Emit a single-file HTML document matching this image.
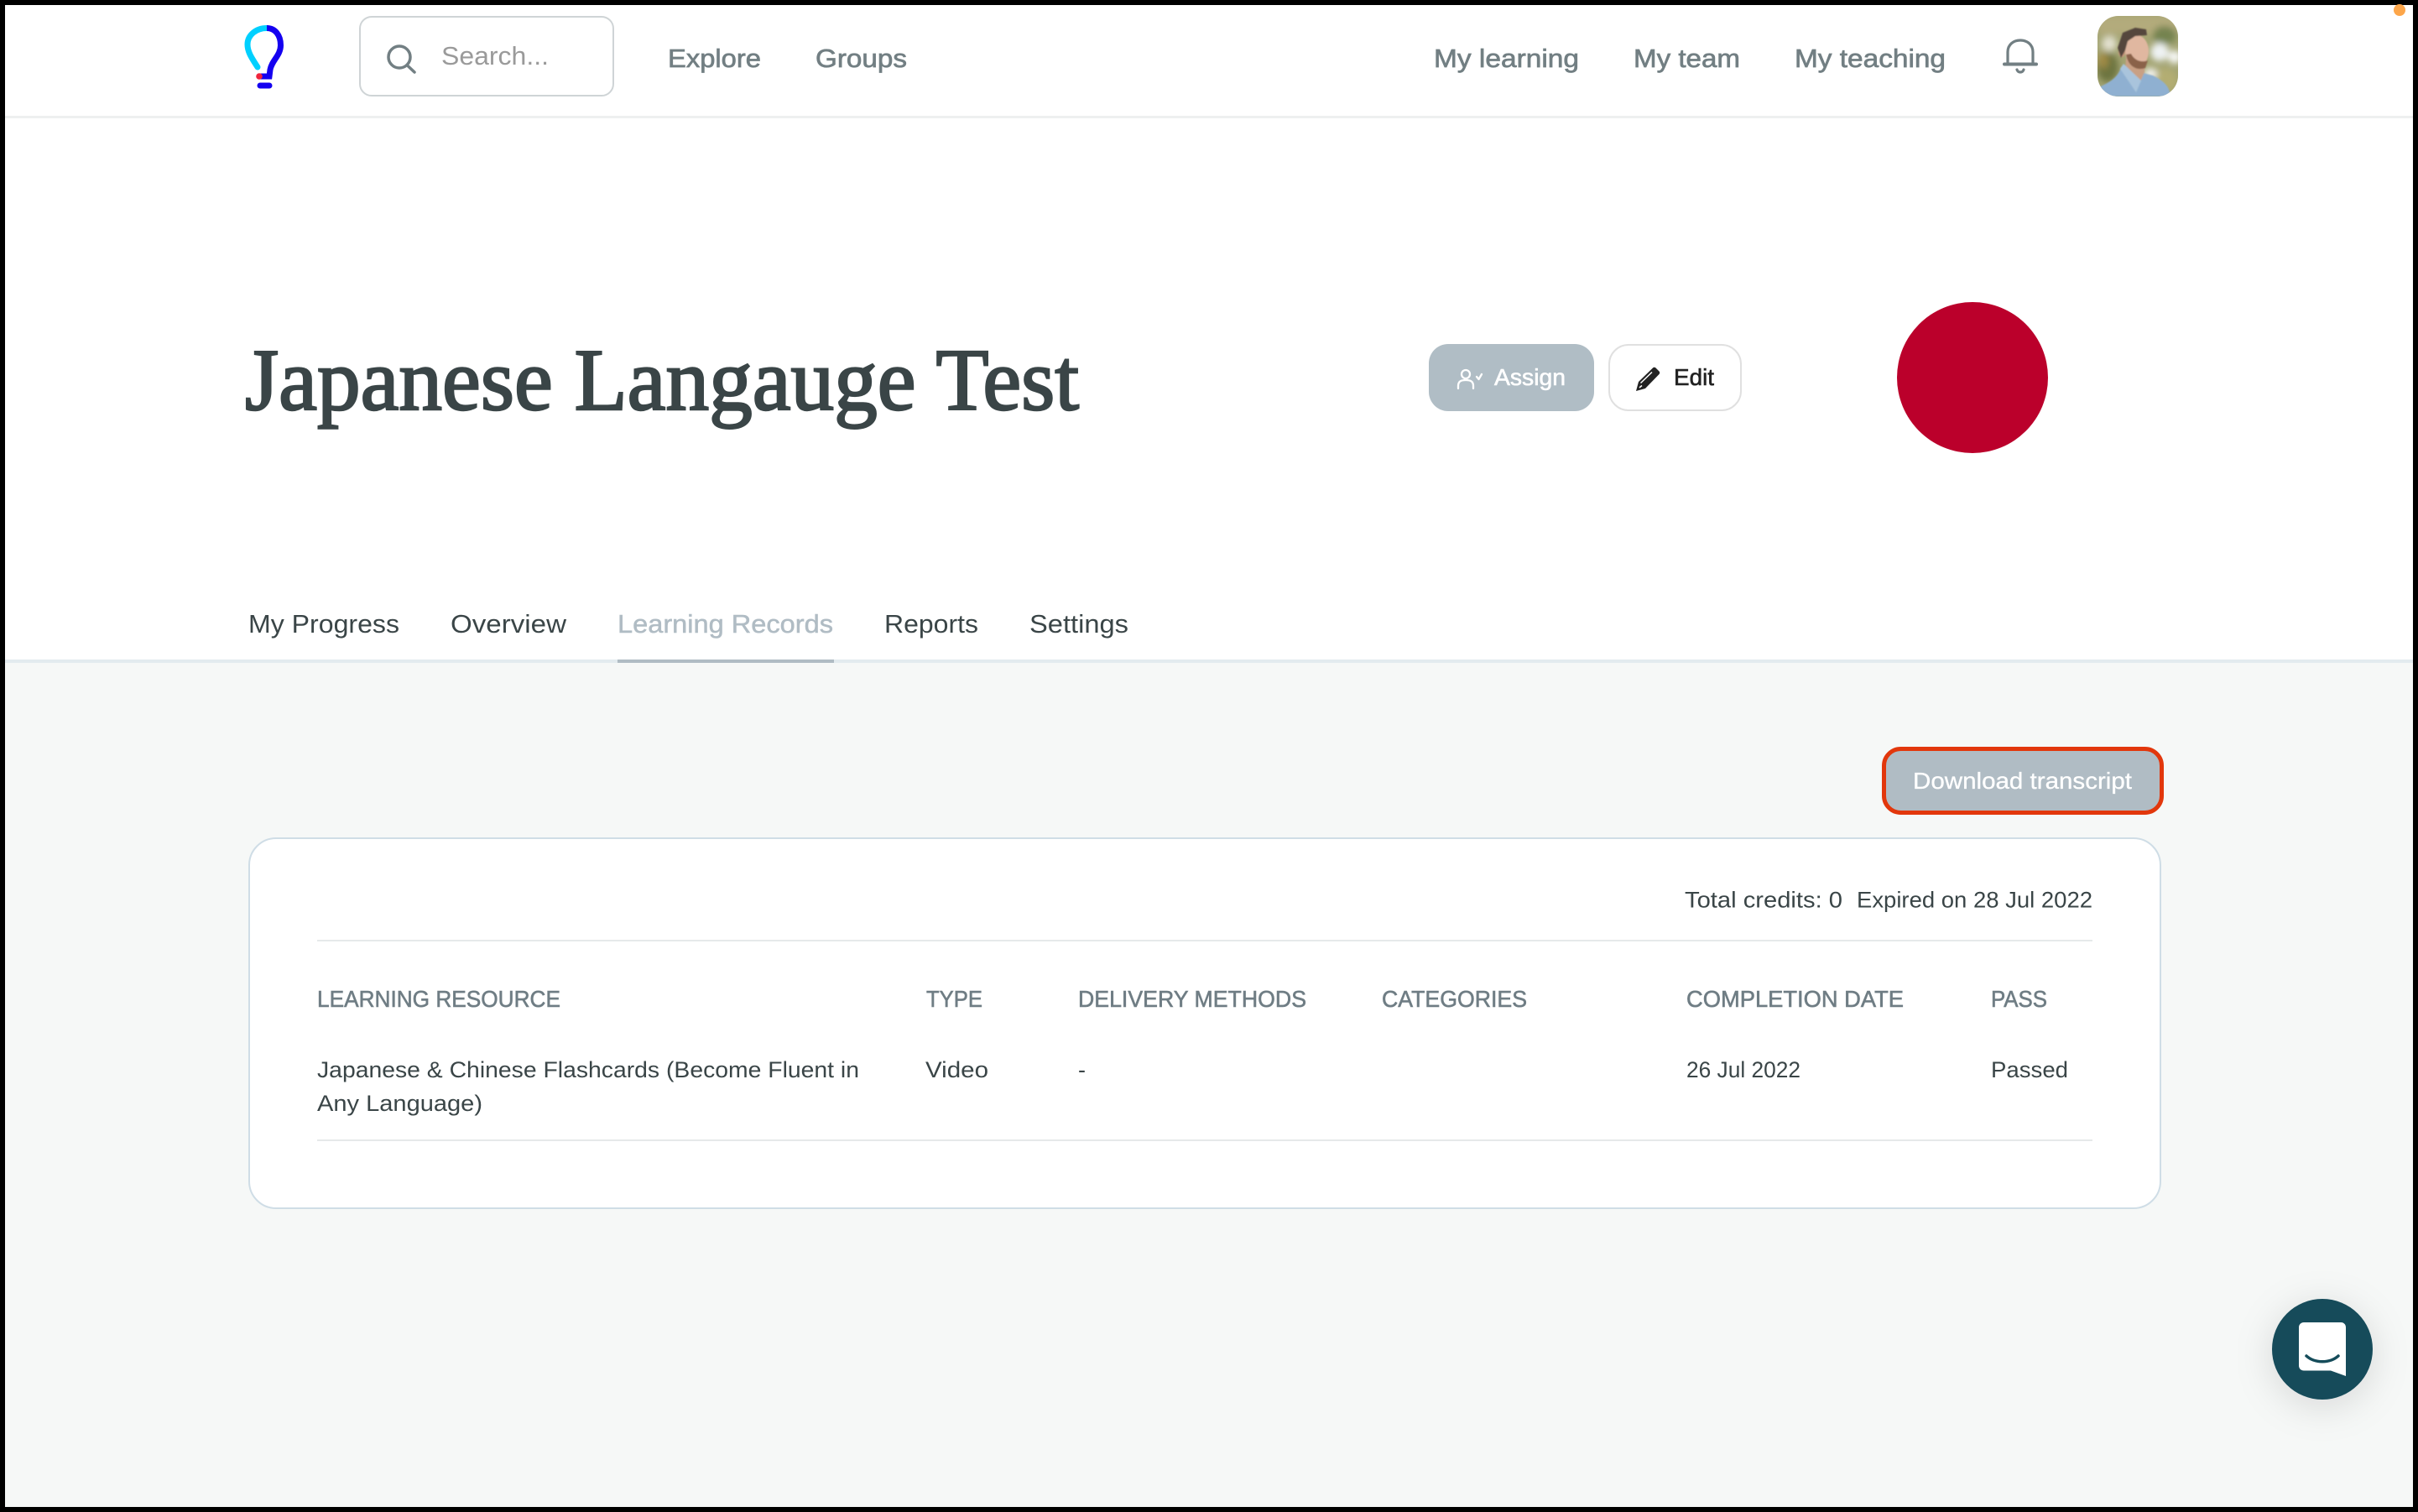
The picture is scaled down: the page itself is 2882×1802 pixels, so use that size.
<!DOCTYPE html>
<html lang="en">
<head>
<meta charset="utf-8">
<title>Japanese Langauge Test</title>
<style>
html,body{margin:0;padding:0;background:#000;width:2882px;height:1802px;overflow:hidden}
svg{display:block;position:absolute;left:0;top:0}
text{font-family:"Liberation Sans",sans-serif}
.nav{font-size:31px;fill:#727f83;stroke:#727f83;stroke-width:.7px}
.tab{font-size:31px;fill:#3a4547}
.hd{font-size:28px;fill:#6f7d84;stroke:#6f7d84;stroke-width:.6px}
.td{font-size:27px;fill:#3a4547}
</style>
</head>
<body>
<svg width="2882" height="1802" viewBox="0 0 2882 1802" xmlns="http://www.w3.org/2000/svg">
<defs>
<filter id="sh" x="-60%" y="-60%" width="220%" height="220%"><feDropShadow dx="0" dy="8" stdDeviation="22" flood-color="#000" flood-opacity=".13"/></filter>
<filter id="b5" x="-30%" y="-30%" width="160%" height="160%"><feGaussianBlur stdDeviation="4"/></filter>
<filter id="b2" x="-30%" y="-30%" width="160%" height="160%"><feGaussianBlur stdDeviation=".9"/></filter>
<clipPath id="av"><rect x="2500" y="19" width="96" height="96" rx="25"/></clipPath>
</defs>

<rect x="6" y="6" width="2870" height="1790" fill="#fff"/>
<rect x="6" y="788" width="2870" height="1008" fill="#f6f8f7"/>
<rect x="6" y="138" width="2870" height="3" fill="#eef0f0"/>
<rect x="6" y="786" width="2870" height="4" fill="#e3ebef"/>
<circle cx="2860" cy="12" r="7" fill="#fda64a"/>

<!-- logo -->
<g fill="none" stroke-width="7" stroke-linecap="round">
<path d="M307 80 C300 69 295 62 295 53 C295 42 305 33.500 318 33.500" stroke="#00d0ff"/>
<path d="M318 33.500 C328 33.500 334.500 42 334.500 54 C334.500 66 324 72 322 83 L321 91 L309 91" stroke="#1400f0" stroke-linecap="butt"/>
<path d="M310 102 L321 102" stroke="#1400f0"/>
</g>
<circle cx="309" cy="91" r="3.800" fill="#f0243c"/>

<!-- search -->
<rect x="429" y="20" width="302" height="94" rx="14" fill="#fff" stroke="#cfd4d6" stroke-width="2"/>
<g fill="none" stroke="#727f83" stroke-width="3.500" stroke-linecap="round">
<circle cx="476" cy="68" r="13"/><path d="M485.500 78 L494 86"/>
</g>
<text x="526" y="77" font-size="31" fill="#9a9a9a" textLength="128" lengthAdjust="spacingAndGlyphs">Search...</text>

<text class="nav" x="796" y="80" textLength="111" lengthAdjust="spacingAndGlyphs">Explore</text>
<text class="nav" x="972" y="80" textLength="109" lengthAdjust="spacingAndGlyphs">Groups</text>
<text class="nav" x="1709" y="80" textLength="173" lengthAdjust="spacingAndGlyphs">My learning</text>
<text class="nav" x="1947" y="80" textLength="127" lengthAdjust="spacingAndGlyphs">My team</text>
<text class="nav" x="2139" y="80" textLength="180" lengthAdjust="spacingAndGlyphs">My teaching</text>

<!-- bell -->
<g fill="none" stroke="#727f83" stroke-width="3.200" stroke-linecap="round" stroke-linejoin="round">
<path d="M2393 75 V62 C2393 53 2400 48 2408 48 C2416 48 2423 53 2423 62 V75"/>
<path d="M2389 76.500 H2427" stroke-width="4"/>
<path d="M2404 83 C2405 87 2411 87 2412 83"/>
</g>

<!-- avatar -->
<g clip-path="url(#av)">
<rect x="2500" y="19" width="96" height="96" fill="#a3a472"/>
<g filter="url(#b5)">
<rect x="2500" y="19" width="96" height="22" fill="#b3ab7c"/>
<ellipse cx="2512" cy="80" rx="13" ry="18" fill="#6d7440"/>
<ellipse cx="2514" cy="52" rx="9" ry="9" fill="#e2e0cf"/>
<ellipse cx="2507" cy="72" rx="6" ry="10" fill="#a08a45"/>
<ellipse cx="2580" cy="42" rx="14" ry="11" fill="#75834f"/>
<ellipse cx="2574" cy="62" rx="11" ry="11" fill="#eef2f3"/>
<ellipse cx="2592" cy="68" rx="8" ry="8" fill="#f6f7f5"/>
<ellipse cx="2580" cy="96" rx="15" ry="15" fill="#b3ad72"/>
<ellipse cx="2563" cy="88" rx="8" ry="7" fill="#f2f2ee"/>
</g>
<g filter="url(#b2)">
<path d="M2500 105 C2512 99 2524 94 2528 80 L2566 90 C2578 96 2586 102 2587 115 H2500Z" fill="#8fb0d1"/>
<path d="M2534 70 L2533 84 L2548 104 L2556 86 L2556 72Z" fill="#c9a084"/>
<ellipse cx="2529" cy="62" rx="4" ry="6" fill="#c9977d"/>
<ellipse cx="2547" cy="61" rx="14" ry="19" fill="#e0b7a0"/>
<path d="M2534 65 C2536 78 2546 85 2557 81 L2560 72 C2552 75 2544 72 2540 64Z" fill="#8a6248"/>
<path d="M2524 57 L2530 39 L2545 33 L2558 35 L2559 42 L2545 43 L2536 49 L2533 60 L2528 69Z" fill="#54463d"/>
<path d="M2527 82 L2546 110 L2552 96 L2531 76Z" fill="#a9c4dc"/>
</g>
</g>

<!-- title -->
<text x="292" y="488" font-size="105" fill="#3a4547" stroke="#3a4547" stroke-width="2.400" textLength="994" lengthAdjust="spacingAndGlyphs" style="font-family:'Liberation Serif',serif">Japanese Langauge Test</text>

<!-- assign / edit -->
<rect x="1703" y="410" width="197" height="80" rx="23" fill="#b0bdc5"/>
<g fill="none" stroke="#fff" stroke-width="2.300" stroke-linecap="round" stroke-linejoin="round">
<circle cx="1747" cy="446" r="5"/>
<path d="M1738 463 V460 C1738 454 1742 453 1747 453 C1752 453 1756 454 1756 460 V463"/>
<path d="M1760 449 L1762.500 452 L1766 446"/>
</g>
<text x="1781" y="459" font-size="28" fill="#fff" stroke="#fff" stroke-width=".6" textLength="85" lengthAdjust="spacingAndGlyphs">Assign</text>

<rect x="1918" y="411" width="157" height="78" rx="23" fill="#fff" stroke="#e0e0e0" stroke-width="2"/>
<path d="M1950 466 L1953 455 L1970 438.500 C1971 437.500 1972.500 437.500 1973.500 438.500 L1977.500 442.500 C1978.500 443.500 1978.500 445 1977.500 446 L1961 463Z" fill="#222"/>
<path d="M1955.500 456.500 L1969 443.500 M1954 462 L1957 459.500" stroke="#fff" stroke-width="1.500" fill="none"/>
<text x="1995" y="459" font-size="28" fill="#222" stroke="#222" stroke-width=".6" textLength="48" lengthAdjust="spacingAndGlyphs">Edit</text>

<circle cx="2351" cy="450" r="90" fill="#bb002b"/>

<!-- tabs -->
<text class="tab" x="296" y="754" textLength="180" lengthAdjust="spacingAndGlyphs">My Progress</text>
<text class="tab" x="537" y="754" textLength="138" lengthAdjust="spacingAndGlyphs">Overview</text>
<text class="tab" x="736" y="754" textLength="257" lengthAdjust="spacingAndGlyphs" style="fill:#b0bcc4;stroke:#b0bcc4;stroke-width:.5px">Learning Records</text>
<text class="tab" x="1054" y="754" textLength="112" lengthAdjust="spacingAndGlyphs">Reports</text>
<text class="tab" x="1227" y="754" textLength="118" lengthAdjust="spacingAndGlyphs">Settings</text>
<rect x="736" y="786" width="258" height="4" fill="#b0bcc4"/>

<!-- download -->
<rect x="2245.500" y="892.500" width="331" height="76" rx="20" fill="#b0bcc4" stroke="#e2370c" stroke-width="5"/>
<text x="2280" y="940" font-size="27.500" fill="#fff" stroke="#fff" stroke-width=".3" textLength="261" lengthAdjust="spacingAndGlyphs">Download transcript</text>

<!-- card -->
<rect x="297" y="999" width="2278" height="441" rx="32" fill="#fff" stroke="#cfdde6" stroke-width="2"/>
<text class="td" x="2008" y="1081.500" textLength="188" lengthAdjust="spacingAndGlyphs">Total credits: 0</text>
<text class="td" x="2213" y="1081.500" textLength="281" lengthAdjust="spacingAndGlyphs">Expired on 28 Jul 2022</text>
<rect x="378" y="1120" width="2116" height="2" fill="#e6e9ea"/>
<rect x="378" y="1358" width="2116" height="2" fill="#e6e9ea"/>

<text class="hd" x="378" y="1200" textLength="290" lengthAdjust="spacingAndGlyphs">LEARNING RESOURCE</text>
<text class="hd" x="1104" y="1200" textLength="67" lengthAdjust="spacingAndGlyphs">TYPE</text>
<text class="hd" x="1285" y="1200" textLength="272" lengthAdjust="spacingAndGlyphs">DELIVERY METHODS</text>
<text class="hd" x="1647" y="1200" textLength="173" lengthAdjust="spacingAndGlyphs">CATEGORIES</text>
<text class="hd" x="2010" y="1200" textLength="259" lengthAdjust="spacingAndGlyphs">COMPLETION DATE</text>
<text class="hd" x="2373" y="1200" textLength="67" lengthAdjust="spacingAndGlyphs">PASS</text>

<text class="td" x="378" y="1284" textLength="646" lengthAdjust="spacingAndGlyphs">Japanese &amp; Chinese Flashcards (Become Fluent in</text>
<text class="td" x="378" y="1324" textLength="197" lengthAdjust="spacingAndGlyphs">Any Language)</text>
<text class="td" x="1103" y="1284" textLength="75" lengthAdjust="spacingAndGlyphs">Video</text>
<text class="td" x="1285" y="1284">-</text>
<text class="td" x="2010" y="1284" textLength="136" lengthAdjust="spacingAndGlyphs">26 Jul 2022</text>
<text class="td" x="2373" y="1284" textLength="92" lengthAdjust="spacingAndGlyphs">Passed</text>

<!-- chat -->
<circle cx="2768" cy="1608" r="60" fill="#154c5a" filter="url(#sh)"/>
<path d="M2746 1576 H2790 C2793.500 1576 2796 1578.500 2796 1582 V1640 L2778 1633.500 H2746 C2742.500 1633.500 2740 1631 2740 1627.500 V1582 C2740 1578.500 2742.500 1576 2746 1576Z" fill="#fff"/>
<path d="M2749 1616 C2759 1625 2777 1625 2787 1616" fill="none" stroke="#154c5a" stroke-width="3.500" stroke-linecap="round"/>
</svg>
</body>
</html>
